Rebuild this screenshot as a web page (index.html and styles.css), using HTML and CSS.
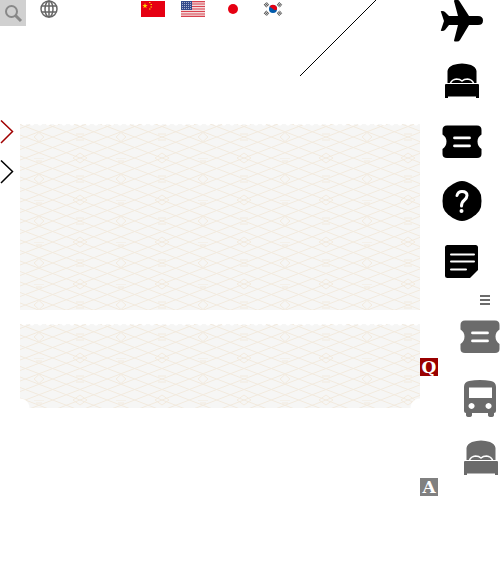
FILE: index.html
```html
<!DOCTYPE html>
<html lang="en">
<head>
<meta charset="utf-8">
<meta name="viewport" content="width=device-width, initial-scale=1">
<title>Travel</title>
<link rel="stylesheet" href="styles.css">
</head>
<body>
<svg class="defs" aria-hidden="true">
  <symbol id="ticket" viewBox="0 0 40 34"><path fill-rule="evenodd" d="M5 .5H35Q39.500 .5 39.500 5V9.500Q35.500 12 35.500 16.500T39.500 24V29Q39.500 33 35 33H5Q.5 33 .5 29V24Q4.500 21 4.500 16.500T.5 9.500V5Q.5 .5 5 .5ZM12.500 11.500a1.400 1.400 0 0 0 0 2.800H27.500a1.400 1.400 0 0 0 0-2.800ZM12.500 19.500a1.400 1.400 0 0 0 0 2.800H27.500a1.400 1.400 0 0 0 0-2.800Z"/></symbol>
  <symbol id="bed" viewBox="0 0 36 36"><path d="M3.500 20V8Q4 4 9 2Q18-1 27 2Q32 4 32.500 8V20ZM2 21H34Q35 21 35 22V35H32V33.500H4V35H1V22Q1 21 2 21Z"/><path class="pillow" d="M6.500 20Q8 16.500 12.500 16Q16 16 18 18Q20 16 23.500 16Q28 16.500 29.500 20"/></symbol>
</svg>
<div class="page">
  <main class="main">
    <header class="top">
      <button class="search" aria-label="Search"><svg width="26" height="26" viewBox="0 0 26 26"><circle cx="11.500" cy="11.500" r="5.500"/><path d="M15.500 15.500l5.500 5.500" stroke-width="3"/></svg></button>
      <button class="globe" aria-label="Language"><svg width="18" height="18" viewBox="0 0 18 18"><circle cx="9" cy="9" r="8"/><ellipse cx="9" cy="9" rx="4" ry="8"/><path d="M9 1V17M2 6H16M2 12H16"/></svg></button>
      <nav class="flags">
        <a href="#" aria-label="Chinese"><svg width="24" height="16" viewBox="0 0 24 16"><path fill="#e60012" d="M0 0h24v16H0z"/><path fill="#ffd800" d="M4 2l.7 2h2L5 5.200l.7 2L4 6 2.300 7.200l.7-2L1.300 4h2zM8 1h1.500v1H8zM9.500 3H11v1H9.500zM9.500 5.500H11v1H9.500zM8 7.500h1.500v1H8z"/></svg></a>
        <a href="#" aria-label="English"><svg width="24" height="16" viewBox="0 0 24 16"><path fill="#f3dcdc" d="M0 0h24v16H0z"/><path stroke="#d94350" stroke-width="1.200" d="M0 .6H24M0 3H24M0 5.500H24M0 8H24M0 10.500H24M0 13H24M0 15.400H24"/><path fill="#344a8b" d="M0 0h11v9H0z"/><path stroke="#a8b0cf" stroke-dasharray="1 1" d="M1 1.500H10M1 3.500H10M1 5.500H10M1 7.500H10"/></svg></a>
        <a href="#" aria-label="Japanese"><svg width="24" height="16" viewBox="0 0 24 16"><circle cx="12" cy="8" r="5" fill="#e60012"/></svg></a>
        <a href="#" aria-label="Korean"><svg width="24" height="16" viewBox="0 0 24 16"><circle cx="12" cy="8" r="4" fill="#005bac"/><path fill="#e60012" d="M8.500 6A4 4 0 0 1 16 8.500Q14 10 12 8T8.500 6"/><path stroke="#555" stroke-width="4" stroke-dasharray="1 .6" d="M4 5l3-2.500M17 13.500l3-2.500M4 11l3 2.500M17 2.500L20 5"/></svg></a>
      </nav>
      <svg class="slash" width="76" height="76" viewBox="0 0 76 76" aria-hidden="true"><path d="M0 76L76 0"/></svg>
    </header>
    <div class="content">
      <div class="arrows">
        <button class="arrow red" aria-label="Next"><svg width="14" height="24" viewBox="0 0 14 24"><path d="M1 .5L12.500 11.500L1 23"/></svg></button>
        <button class="arrow" aria-label="Next"><svg width="14" height="24" viewBox="0 0 14 24"><path d="M1 .5L12.500 11.500L1 23"/></svg></button>
      </div>
      <div class="panels">
        <section class="panel large"><svg width="100%" height="100%" aria-hidden="true">
          <defs><pattern id="weave" width="82" height="42" x="-22" y="-8" patternUnits="userSpaceOnUse"><path class="weave" d="M0-31.500L82 0M0-21L82 10.500M0-10.500L82 21M0 0L82 31.500M0 10.500L82 42M0 21L82 52.500M0 31.500L82 63M0 42L82 73.500M82-31.500L0 0M82-21L0 10.500M82-10.500L0 21M82 0L0 31.500M82 10.500L0 42M82 21L0 52.500M82 31.500L0 63M82 42L0 73.500M36 21L41 16.500L46 21L41 25.500ZM0 37L7 42M0 5L7 0M75 42L82 37M75 0L82 5M36 0H46M38 3H44M0 18H4M0 24H4M78 18H82M78 24H82"/></pattern></defs>
          <rect width="100%" height="100%" fill="url(#weave)"/></svg></section>
        <section class="panel small"><svg width="100%" height="100%" aria-hidden="true"><rect width="100%" height="100%" fill="url(#weave)"/></svg></section>
      </div>
    </div>
  </main>
  <div class="badges"><span class="badge question">Q</span><span class="badge">A</span></div>
  <nav class="icons">
    <a href="#" aria-label="Flights"><svg width="60" height="60" viewBox="0 0 60 60"><path d="M15 0H18Q19 0 20 2L29 16H38Q43 16 43 20.500T38 25H29L20 40Q19 41.500 17 41.500H15Q14 41.500 14 40.500L18 25H9L5 30Q4 31 2 31Q0 31 1 30L4 21L1 12Q0 11 2 11Q4 11 5 12L9 16H18L14 1Q14 0 15 0Z"/></svg></a>
    <a href="#" aria-label="Hotels"><svg width="60" height="60" viewBox="0 0 60 60"><use href="#bed" x="4" y="3" width="36" height="36"/></svg></a>
    <a href="#" aria-label="Tickets"><svg width="60" height="60" viewBox="0 0 60 60"><use href="#ticket" x="2" y="5" width="40" height="34"/></svg></a>
    <a href="#" aria-label="Questions"><svg width="60" height="60" viewBox="0 0 60 60"><path d="M17 2Q22 0 27 2Q32 4 36 7.500Q40 11 41 15Q42 21 41 27Q40 31 36 34.500Q32 38 27 40Q22 42 17 40Q12 38 8 34.500Q4 31 3 27Q2 21 3 15Q4 11 8 7.500Q12 4 17 2Z"/><path class="cut" stroke-width="3" d="M17 15.500Q18 11.500 22 11.500Q27 11.500 27 15.500Q27 18 24 20.500Q21.500 22.500 21.500 26"/><circle cx="21.500" cy="31" r="2" fill="#fff"/></svg></a>
    <a href="#" aria-label="Notes"><svg width="60" height="40" viewBox="0 0 60 40"><path d="M7.500 5H35.500Q38 5 38 7.500V30L30 38H7.500Q5 38 5 35.500V7.500Q5 5 7.500 5Z"/><path class="cut" stroke-width="2" d="M11 14.500H34M11 21.500H34M11 29.500H26"/></svg></a>
    <button class="menu" aria-label="Menu"><svg width="60" height="40" viewBox="0 0 60 40"><path d="M40 15h10v2H40zM40 19h10v2H40zM40 23h10v2H40z"/></svg></button>
    <a class="gray" href="#" aria-label="Tickets"><svg width="60" height="60" viewBox="0 0 60 60"><use href="#ticket" x="20" width="40" height="34"/></svg></a>
    <a class="gray" href="#" aria-label="Buses"><svg width="60" height="60" viewBox="0 0 60 60"><path fill-rule="evenodd" d="M29 1Q40-1 51 1Q56 2 56 7V31Q56 33 54 33V35Q54 37 51 37T48 35V33H32V35Q32 37 29 37T26 35V33Q24 33 24 31V7Q24 2 29 1ZM29 7.500V18H52V7.500ZM31.500 23a3 3 0 1 0 .1 0ZM48.500 23a3 3 0 1 0 .1 0Z"/></svg></a>
    <a class="gray" href="#" aria-label="Hotels"><svg width="60" height="60" viewBox="0 0 60 60"><use href="#bed" x="23" width="36" height="36"/></svg></a>
  </nav>
</div>
</body>
</html>
```
FILE: styles.css
```css
* { box-sizing: border-box; }
body { margin: 0; background: #fff; font-family: "Liberation Serif", serif; }
svg { display: block; }
button { padding: 0; border: 0; background: none; }
.defs { display: none; }
.page { display: flex; }
.main { flex: 1; min-width: 0; }
.top { display: flex; align-items: flex-start; height: 120px; }
.search { background: #d0d0d0; }
.search svg, .globe svg { fill: none; stroke: #888; stroke-width: 2; }
.globe { margin-left: 14px; }
.globe svg { stroke: #666; stroke-width: 1.5; }
.flags { display: flex; gap: 16px; margin-left: auto; padding-top: 1px; }
.slash { margin: 0 44px 0 15px; fill: none; stroke: #000; shape-rendering: crispEdges; }
.content { display: flex; }
.arrows { display: flex; flex-direction: column; align-items: flex-start; gap: 16px; width: 20px; }
.arrow svg { fill: none; stroke: #000; stroke-width: 1.5; }
.red svg { stroke: #a00000; }
.panels { flex: 1; display: flex; flex-direction: column; gap: 14px; padding-top: 4px; }
.panel { position: relative; background: #f6f6f5; }
.panel::before {
  content: "";
  position: absolute;
  inset: 0 0 auto;
  height: 3px;
  background: radial-gradient(circle at 4px -1px, #fff 2px, transparent 3px) 0 0 / 8px 3px;
}
.large { height: 186px; }
.small {
  height: 84px;
  mask: radial-gradient(circle at 0 100%, transparent 9px, #000 10px) left / 50% 100% no-repeat,
    radial-gradient(circle at 100% 100%, transparent 9px, #000 10px) right / 50% 100% no-repeat;
}
.weave { fill: none; stroke: #f2eade; stroke-width: 1; }
.badges { display: flex; flex-direction: column; gap: 102px; width: 20px; padding-top: 358px; }
.badge {
  width: 18px;
  height: 18px;
  background: #808080;
  color: #fff;
  font: bold 17px/18px "DejaVu Serif", serif;
  text-align: center;
}
.question { background: #900; }
.icons { display: flex; flex-direction: column; width: 60px; }
.icons .gray, .icons .menu { fill: #6b6b6b; }
.pillow, .cut { fill: none; stroke: #fff; stroke-linecap: round; }
.pillow { stroke-width: 1.5; }
```
